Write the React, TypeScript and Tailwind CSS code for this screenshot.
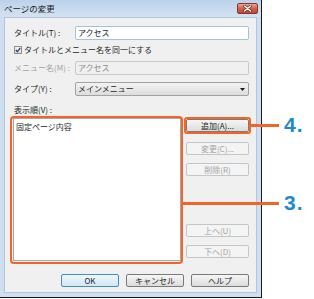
import React from 'react';

const orange = 'bg-[#f26527]';

const SideButton = ({ label, disabled, className = '' }: { label: string; disabled?: boolean; className?: string }) => (
  <div
    className={`h-[13px] w-[63px] flex items-center justify-center rounded-[2px] border ${
      disabled
        ? 'border-[#c3c6c9] bg-[#f4f4f4] text-[#a3a3a3]'
        : 'border-[#7a7a7a] bg-gradient-to-b from-[#f6f6f6] to-[#dcdcdc] text-[#1a1a1a]'
    } ${className}`}
  >
    {label}
  </div>
);

const BottomButton = ({ label, primary }: { label: string; primary?: boolean }) => (
  <div
    className={`h-[13px] w-[58px] flex items-center justify-center rounded-[2px] border ${
      primary
        ? 'border-[#3c8fc8] bg-gradient-to-b from-[#eef6fc] to-[#d4e6f3]'
        : 'border-[#7a7a7a] bg-gradient-to-b from-[#f6f6f6] to-[#dcdcdc]'
    }`}
  >
    {label}
  </div>
);

export default function App() {
  return (
    <div className="relative w-[314px] h-[299px] bg-white font-['Noto_Sans_CJK_JP','Noto_Sans',sans-serif] text-[8px] leading-none text-[#1e1e1e]">
      {/* dialog window */}
      <div className="flex flex-col w-[262px] h-[298px] bg-[#cfdef0] border-r border-b border-[#1c1c1c]">
        {/* title bar */}
        <div className="h-[17px] flex items-center justify-between pl-[4px] pr-[3px] bg-gradient-to-b from-[#bcd2ea] to-[#d3e2f3]">
          <span className="text-[8.5px] text-[#1a1a1a]">ページの変更</span>
          <div className="w-[21px] h-[11px] mb-[1px] rounded-[2px] border border-[#83382c] bg-gradient-to-b from-[#e9a797] via-[#d06049] to-[#bb4a35] flex items-center justify-center">
            <svg width="9" height="7" viewBox="0 0 9 7">
              <path d="M1.5 1 L7.5 6 M7.5 1 L1.5 6" stroke="#5a2018" strokeWidth="2.6" strokeLinecap="round" />
              <path d="M1.5 1 L7.5 6 M7.5 1 L1.5 6" stroke="#ffffff" strokeWidth="1.4" strokeLinecap="round" />
            </svg>
          </div>
        </div>

        {/* client area */}
        <div className="flex-1 mx-[4px] mb-[4px] bg-[#f0f0f0] border border-[#b3c5dc] flex flex-col pl-[8px] pr-[7px] pt-[8px] pb-[5px]">
          <div className="flex items-center h-[14px]">
            <span className="ml-[1px] w-[61px]">タイトル(T) :</span>
            <div className="flex-1 h-[14px] bg-white border border-[#9fc4de] rounded-[2px] flex items-center pl-[2px]">アクセス</div>
          </div>

          <div className="flex items-center h-[10px] mt-[5px] ml-[1px]">
            <div className="w-[8px] h-[8px] border border-[#8e8f8f] bg-gradient-to-b from-[#f4f4f4] to-[#dedede] flex items-center justify-center mr-[2px]">
              <svg width="6" height="6" viewBox="0 0 6 6">
                <path d="M0.8 3 L2.4 4.8 L5.3 0.8" stroke="#2f3f7a" strokeWidth="1.3" fill="none" />
              </svg>
            </div>
            <span>タイトルとメニュー名を同一にする</span>
          </div>

          <div className="flex items-center h-[14px] mt-[6px]">
            <span className="ml-[1px] w-[61px] text-[#a2a2a2]">メニュー名(M) :</span>
            <div className="flex-1 h-[14px] bg-[#f0f0f0] border border-[#c9c9c9] rounded-[2px] flex items-center pl-[2px] text-[#8d8d8d]">アクセス</div>
          </div>

          <div className="flex items-center h-[14px] mt-[7px]">
            <span className="ml-[1px] w-[61px]">タイプ(Y) :</span>
            <div className="flex-1 h-[14px] bg-gradient-to-b from-[#f3f3f3] to-[#dddddd] border border-[#a2a2a2] rounded-[2px] flex items-center justify-between pl-[2px] pr-[3px]">
              <span>メインメニュー</span>
              <svg width="5" height="3" viewBox="0 0 5 3">
                <path d="M0 0 H5 L2.5 3 Z" fill="#1a1a1a" />
              </svg>
            </div>
          </div>

          <div className="h-[10px] mt-[9px] ml-[1px] flex items-center">表示順(V) :</div>

          <div className="flex mt-[3px] gap-[5px]">
            <div className="w-[168px] h-[143px] bg-white border border-[#a5a9ae] pl-[2px] pt-[4px]">固定ページ内容</div>
            <div className="flex flex-col w-[63px]">
              <SideButton label="追加(A)..." className="mt-[1px]" />
              <SideButton label="変更(C)..." disabled className="mt-[10px]" />
              <SideButton label="削除(R)" disabled className="mt-[8px]" />
              <SideButton label="上へ(U)" disabled className="mt-auto" />
              <SideButton label="下へ(D)" disabled className="mt-[8px] mb-[3px]" />
            </div>
          </div>

          <div className="flex justify-end gap-[7px] mt-[13px]">
            <BottomButton label="OK" primary />
            <BottomButton label="キャンセル" />
            <BottomButton label="ヘルプ" />
          </div>
        </div>
      </div>

      {/* callouts */}
      <div className="absolute left-[10px] top-[116px] w-[173px] h-[148px] border-[2.5px] border-[#f26527] rounded-[4px]" />
      <div className="absolute left-[184px] top-[117px] w-[67px] h-[17px] border-2 border-[#f26527] rounded-[3px]" />
      <div className={`absolute left-[251px] top-[124px] w-[28px] h-[3px] ${orange}`} />
      <div className={`absolute left-[182px] top-[202px] w-[97px] h-[3px] ${orange}`} />
      <span className="absolute left-[284px] top-[114px] font-['Liberation_Sans',sans-serif] font-bold text-[21px] tracking-[1px] text-[#1a8bd3]">4.</span>
      <span className="absolute left-[284px] top-[192px] font-['Liberation_Sans',sans-serif] font-bold text-[21px] tracking-[1px] text-[#1a8bd3]">3.</span>
    </div>
  );
}
